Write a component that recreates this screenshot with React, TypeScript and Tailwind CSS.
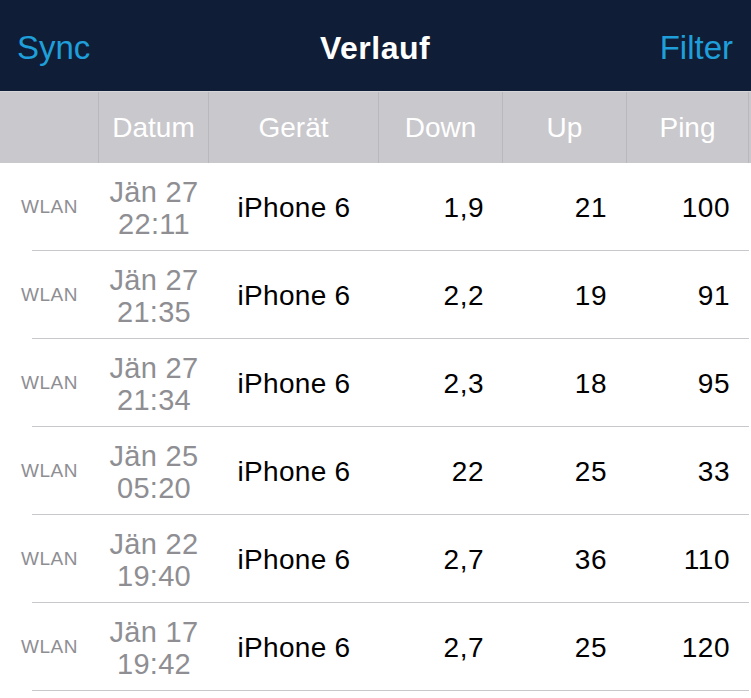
import React from "react";

type Row = { date: string; time: string; down: string; up: string; ping: string };

const rows: Row[] = [
  { date: "Jän 27", time: "22:11", down: "1,9", up: "21", ping: "100" },
  { date: "Jän 27", time: "21:35", down: "2,2", up: "19", ping: "91" },
  { date: "Jän 27", time: "21:34", down: "2,3", up: "18", ping: "95" },
  { date: "Jän 25", time: "05:20", down: "22", up: "25", ping: "33" },
  { date: "Jän 22", time: "19:40", down: "2,7", up: "36", ping: "110" },
  { date: "Jän 17", time: "19:42", down: "2,7", up: "25", ping: "120" },
];

const cols = "grid grid-cols-[99px_110px_170px_124px_124px_122px]";

export default function App() {
  return (
    <div className="w-[751px] h-[698px] bg-white overflow-hidden" style={{ fontFamily: '"Liberation Sans", Arial, sans-serif' }}>
      {/* nav bar */}
      <div className="h-[91px] bg-[#0f1e36] flex items-center justify-between pl-[17px] pr-[18px] pt-[4px]">
        <span className="text-[33px] text-[#1f9fda]">Sync</span>
        <span className="text-[32px] font-semibold text-white tracking-[0.5px]">Verlauf</span>
        <span className="text-[33px] text-[#1f9fda]">Filter</span>
      </div>

      {/* column headers */}
      <div className={`${cols} h-[72px] bg-[#c9c8cd] border-t border-[#d6d5da] text-white text-[28px]`}>
        <div className="border-r border-[#b9b8bd]" />
        {["Datum", "Gerät", "Down", "Up", "Ping"].map((h) => (
          <div key={h} className="flex items-center justify-center border-r border-[#b9b8bd]">
            {h}
          </div>
        ))}
      </div>

      {/* rows */}
      {rows.map((r, i) => (
        <div key={i}>
          <div className={`${cols} h-[87px] pt-[2px] items-center`}>
            <div className="text-center text-[19px] text-[#8e8e93] tracking-[0.5px]">WLAN</div>
            <div className="text-center text-[29px] leading-[32px] text-[#8e8e93] tracking-[0.3px]">
              <div>{r.date}</div>
              <div>{r.time}</div>
            </div>
            <div className="text-center text-[28px] text-black tracking-[0.3px]">iPhone 6</div>
            <div className="text-right pr-[19px] text-[28px] text-black tracking-[0.5px]">{r.down}</div>
            <div className="text-right pr-[20px] text-[28px] text-black tracking-[0.5px]">{r.up}</div>
            <div className="text-right pr-[19px] text-[28px] text-black tracking-[0.5px]">{r.ping}</div>
          </div>
          <div className="ml-[32px] mr-[2px] h-px bg-[#c8c7cc]" />
        </div>
      ))}
    </div>
  );
}
